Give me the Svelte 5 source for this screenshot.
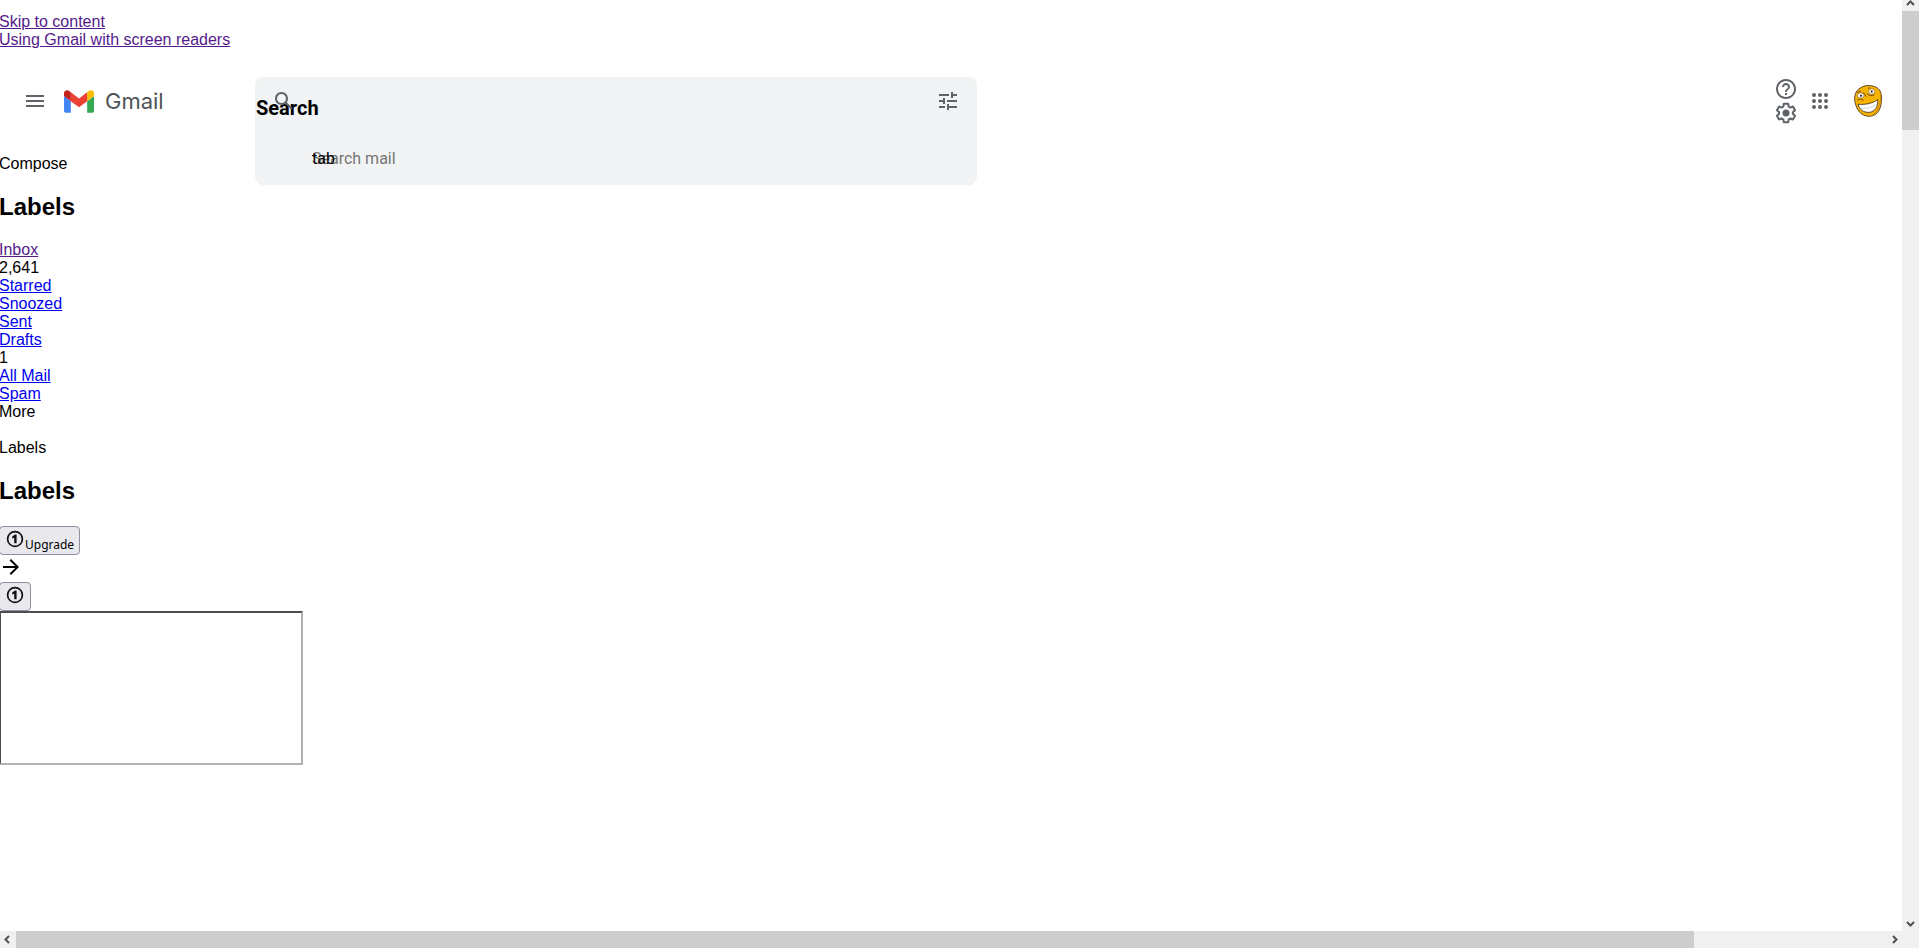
<script>
    const skipLinks = ["Skip to content", "Using Gmail with screen readers"];

    const folders = [
        { name: "Inbox", count: "2,641", visited: true },
        { name: "Starred" },
        { name: "Snoozed" },
        { name: "Sent" },
        { name: "Drafts", count: "1" },
        { name: "All Mail" },
        { name: "Spam" },
    ];

    const dots = [6, 12, 18];

    let query = $state("");
</script>

{#snippet badge()}
    <svg class="badge" viewBox="0 0 18 18" aria-hidden="true">
        <circle cx="9" cy="9" r="7.4" fill="none" stroke="#111" stroke-width="1.7" />
        <path d="M8.2 13.300V7.700l-2 .9V6.500L9 4.600h1.600v8.700z" fill="#111" />
    </svg>
{/snippet}

<div class="window">
    <div class="page">
        <div class="side">
            {#each skipLinks as text}
                <a class="line visited" href="#content">{text}</a>
            {/each}

            <header class="brand">
                <button class="plain icon" aria-label="Main menu">
                    <svg viewBox="0 0 24 24"><path d="M3 18h18v-2H3v2zm0-5h18v-2H3v2zm0-7v2h18V6H3z" /></svg>
                </button>
                <a class="logo" href="#inbox">
                    <svg viewBox="52 42 88 66" aria-hidden="true">
                        <path fill="#4285f4" d="M58 108h14V74L52 59v43c0 3.32 2.69 6 6 6" />
                        <path fill="#34a853" d="M120 108h14c3.32 0 6-2.69 6-6V59l-20 15" />
                        <path fill="#fbbc04" d="M120 48v26l20-15v-8c0-7.42-8.47-11.65-14.4-7.2" />
                        <path fill="#ea4335" d="M72 74V48l24 18 24-18v26L96 92" />
                        <path fill="#c5221f" d="M52 51v8l20 15V48l-5.6-4.2c-5.94-4.45-14.4-.22-14.4 7.2" />
                    </svg>
                    <span>Gmail</span>
                </a>
            </header>

            <button class="plain line">Compose</button>
            <h2>Labels</h2>
            <nav>
                {#each folders as folder}
                    <a class="line" class:visited={folder.visited} href="#{folder.name}">{folder.name}</a>
                    {#if folder.count}
                        <div class="line">{folder.count}</div>
                    {/if}
                {/each}
                <button class="plain line">More</button>
            </nav>
            <div class="line section">Labels</div>
            <h2>Labels</h2>

            <div class="extras">
                <button class="upgrade">{@render badge()}Upgrade</button>
                <svg class="arrow" viewBox="0 0 24 24" aria-hidden="true">
                    <path d="M12 4l-1.41 1.41L16.17 11H4v2h12.17l-5.58 5.59L12 20l8-8z" />
                </svg>
                <button class="upgrade" aria-label="Upgrade">{@render badge()}</button>
                <div class="frame"></div>
            </div>
        </div>

        <form class="search" role="search">
            <button class="plain icon find" type="button" aria-label="Search mail">
                <svg viewBox="0 0 24 24">
                    <path d="M20.49 19l-5.73-5.73C15.53 12.2 16 10.91 16 9.5 16 5.91 13.09 3 9.5 3S3 5.91 3 9.5 5.91 16 9.5 16c1.41 0 2.7-.47 3.77-1.24L19 20.49 20.49 19zM5 9.5C5 7.01 7.01 5 9.5 5S14 7.01 14 9.5 11.99 14 9.5 14 5 11.99 5 9.5z" />
                </svg>
            </button>
            <h2>Search</h2>
            <div class="field">
                <input type="text" placeholder="Search mail" aria-label="Search mail" bind:value={query} />
                <span class="hint">tab</span>
            </div>
            <button class="plain icon tune" type="button" aria-label="Show search options">
                <svg viewBox="0 0 24 24">
                    <path d="M3 17v2h6v-2H3zM3 5v2h10V5H3zm10 16v-2h8v-2h-8v-2h-2v6h2zM7 9v2H3v2h4v2h2V9H7zm14 4v-2H11v2h10zm-6-4h2V7h4V5h-4V3h-2v6z" />
                </svg>
            </button>
        </form>

        <div class="tools">
            <div class="stack">
                <button class="plain icon" aria-label="Support">
                    <svg viewBox="0 0 24 24">
                        <path d="M11 18h2v-2h-2v2zm1-16C6.48 2 2 6.48 2 12s4.48 10 10 10 10-4.48 10-10S17.52 2 12 2zm0 18c-4.41 0-8-3.59-8-8s3.59-8 8-8 8 3.59 8 8-3.59 8-8 8zm0-14c-2.21 0-4 1.79-4 4h2c0-1.1.9-2 2-2s2 .9 2 2c0 2-3 1.75-3 5h2c0-2.25 3-2.5 3-5 0-2.21-1.79-4-4-4z" />
                    </svg>
                </button>
                <button class="plain icon" aria-label="Settings">
                    <svg viewBox="0 0 24 24">
                        <path d="M13.85 22.25h-3.7c-.74 0-1.36-.54-1.45-1.27l-.27-1.89c-.27-.14-.53-.29-.79-.46l-1.8.72c-.7.26-1.47-.03-1.81-.65L2.2 15.53c-.35-.66-.2-1.44.36-1.88l1.53-1.19c-.01-.15-.02-.3-.02-.46 0-.15.01-.31.02-.46l-1.52-1.19c-.59-.45-.74-1.26-.37-1.88l1.85-3.19c.34-.62 1.11-.9 1.79-.63l1.81.73c.26-.17.52-.32.78-.46l.27-1.91c.09-.7.71-1.25 1.44-1.25h3.7c.74 0 1.36.54 1.45 1.27l.27 1.89c.27.14.53.29.79.46l1.8-.72c.71-.26 1.48.03 1.82.65l1.84 3.18c.36.66.2 1.44-.36 1.88l-1.52 1.19c.01.15.02.3.02.46s-.01.31-.02.46l1.52 1.19c.56.45.72 1.23.37 1.86l-1.86 3.22c-.34.62-1.11.9-1.8.63l-1.8-.72c-.26.17-.52.32-.78.46l-.27 1.91c-.1.68-.72 1.22-1.46 1.22zm-3.23-2h2.76l.37-2.55.53-.22c.44-.18.88-.44 1.34-.78l.45-.34 2.38.96 1.38-2.4-2.03-1.58.07-.56c.03-.26.06-.51.06-.78s-.03-.53-.06-.78l-.07-.56 2.03-1.58-1.39-2.4-2.39.96-.45-.35c-.42-.32-.87-.58-1.33-.77l-.52-.22-.37-2.55h-2.76l-.37 2.55-.53.21c-.44.19-.88.44-1.34.79l-.45.33-2.38-.95-1.39 2.39 2.03 1.58-.07.56a7 7 0 0 0-.06.79c0 .26.02.53.06.78l.07.56-2.03 1.58 1.38 2.4 2.39-.96.45.35c.43.33.86.58 1.33.77l.53.22.38 2.55z" />
                        <circle cx="12" cy="12" r="3.5" />
                    </svg>
                </button>
            </div>
            <button class="plain icon" aria-label="Google apps">
                <svg viewBox="0 0 24 24">
                    {#each dots as y}
                        {#each dots as x}
                            <circle cx={x} cy={y} r="2" />
                        {/each}
                    {/each}
                </svg>
            </button>
            <button class="plain avatar" aria-label="Google Account">
                <svg viewBox="0 0 32 32">
                    <path d="M11 1.500C16-.5 24 .5 27.500 5c2.600 4 2.500 10 1.300 15.500C27.500 27 23 31.300 17.500 31.300 11 31.300 6.500 27.500 4.500 22 2.500 17 1.800 12 4 7.500 5.500 4.500 8 2.800 11 1.500z" fill="#f5b301" stroke="#3b2a18" stroke-width=".8" />
                    <path d="M28.300 8c1 5-.5 13-3.500 18-2 3-5 5-8 5" fill="none" stroke="#d98c00" />
                    <path d="M6 19.300c7 .5 14-.6 19.600-4.600.8 6.500-2.600 12.400-8.600 12.700C11.800 27.600 7.500 24.800 6 19.300z" fill="#fff" stroke="#3b2a18" stroke-width=".8" />
                    <path d="M8 23c6 1.200 12-.3 17-4" fill="none" stroke="#bbb" stroke-width=".6" />
                    <ellipse cx="8.700" cy="10.500" rx="3.300" ry="2.600" fill="#fff" stroke="#5a4020" stroke-width=".5" />
                    <ellipse cx="19.700" cy="6.500" rx="3" ry="2.600" fill="#fff" stroke="#5a4020" stroke-width=".5" />
                    <circle cx="9" cy="10.700" r="1" fill="#200" />
                    <circle cx="19.700" cy="6.600" r="1" fill="#200" />
                    <path d="M5 7.500l4-1.500M16 3.500l2-.8M11.500 7.500l2.700 4M15 8.500l3 2.200 4.500-.7M5.500 15l3-1 3 1.300" fill="none" stroke="#5a3500" stroke-width=".8" />
                </svg>
            </button>
        </div>
    </div>

    <div class="bar vertical">
        <svg class="up" viewBox="0 0 9 6"><path d="M1 5l3.500-3.500L8 5" /></svg>
        <div class="thumb"></div>
        <svg class="down" viewBox="0 0 9 6"><path d="M1 1l3.500 3.500L8 1" /></svg>
    </div>
    <div class="bar horizontal">
        <svg viewBox="0 0 6 9"><path d="M5 1L1.500 4.500 5 8" /></svg>
        <div class="thumb"></div>
        <svg viewBox="0 0 6 9"><path d="M1 1l3.500 3.500L1 8" /></svg>
    </div>
</div>

<style>
    :global(body) {
        margin: 0;
        background: #fff;
    }
    .window {
        display: grid;
        grid-template-columns: minmax(0, 1fr) 17px;
        grid-template-rows: minmax(0, 1fr) 17px;
        height: 100vh;
        font-family: "Liberation Sans", Arial, sans-serif;
        font-size: 16px;
        line-height: 18px;
        color: #000;
    }
    .page {
        display: grid;
        grid-template-columns: 256px minmax(0, 722px) minmax(150px, 1fr);
        align-items: start;
        margin-left: -1px;
        overflow: hidden;
    }
    .side {
        padding-top: 13px;
    }
    .line {
        display: block;
        width: fit-content;
        height: 18px;
        white-space: nowrap;
    }
    a {
        color: #0000ee;
    }
    a.visited {
        color: #551a8b;
    }
    .plain {
        padding: 0;
        border: none;
        background: none;
        color: inherit;
        font: inherit;
        cursor: pointer;
    }
    .icon {
        flex: none;
        width: 24px;
        height: 24px;
    }
    .icon svg {
        display: block;
        width: 24px;
        height: 24px;
        fill: #5f6368;
    }
    .brand {
        display: flex;
        align-items: center;
        gap: 17px;
        height: 48px;
        margin: 28px 0 30px;
        padding-left: 24px;
    }
    .logo {
        display: flex;
        align-items: center;
        gap: 11px;
        color: #505356;
        font-family: Inter, Roboto, sans-serif;
        font-size: 22px;
        line-height: 24px;
        text-decoration: none;
    }
    .logo svg {
        width: 30px;
        height: 23px;
    }
    h2 {
        margin: 20px 0;
        font-size: 24px;
        line-height: 28px;
    }
    .section {
        margin-top: 18px;
    }
    .extras {
        display: flex;
        flex-direction: column;
        align-items: flex-start;
        padding-top: 1px;
    }
    .upgrade {
        display: flex;
        align-items: flex-end;
        gap: 1px;
        height: 29px;
        padding: 0 5px 4px 6px;
        border: 1px solid #8f8f9d;
        border-radius: 4px;
        background: #e9e9ed;
        color: #000;
        font-family: "Noto Sans", sans-serif;
        font-size: 12px;
        line-height: 16px;
        box-sizing: border-box;
    }
    .badge {
        width: 18px;
        height: 18px;
        margin-bottom: 2px;
    }
    .upgrade:not([aria-label]) {
        padding-bottom: 1px;
    }
    .upgrade:not([aria-label]) .badge {
        margin-bottom: 5px;
    }
    .upgrade[aria-label] {
        padding-right: 6px;
    }
    .arrow {
        width: 24px;
        height: 24px;
        margin-bottom: 3px;
    }
    .frame {
        width: 300px;
        height: 150px;
        border: 2px solid;
        border-color: #4c4c4c #b2b2b2 #b2b2b2 #4c4c4c;
    }
    .search {
        position: relative;
        height: 108px;
        margin-top: 77px;
        border-radius: 8px;
        background: #f1f3f4;
        font-family: Roboto, sans-serif;
        line-height: 24px;
    }
    .search h2 {
        margin: 0 0 27px;
        padding: 19px 0 0 1px;
        font-size: 20px;
        line-height: 24px;
    }
    .find,
    .tune {
        position: absolute;
        top: 12px;
    }
    .find {
        left: 17px;
    }
    .tune {
        right: 17px;
    }
    .field {
        position: relative;
        margin: 0 56px;
    }
    input {
        display: block;
        width: 100%;
        height: 24px;
        padding: 0 1px;
        border: none;
        outline: none;
        background: transparent;
        font: inherit;
        box-sizing: border-box;
    }
    input::placeholder {
        color: #757575;
        opacity: 1;
    }
    .hint {
        position: absolute;
        top: 0;
        left: 1px;
        pointer-events: none;
    }
    .tools {
        display: flex;
        align-items: center;
        justify-content: flex-end;
        gap: 10px;
        height: 48px;
        margin-top: 77px;
        padding-right: 18px;
    }
    .stack {
        display: flex;
        flex-direction: column;
    }
    .avatar {
        width: 32px;
        height: 32px;
        margin-left: 10px;
    }
    .avatar svg {
        display: block;
    }
    .bar {
        display: flex;
        align-items: center;
        background: #f0f0f0;
    }
    .bar svg {
        flex: none;
        fill: none;
        stroke: #505050;
        stroke-width: 2;
    }
    .thumb {
        background: #cdcdcd;
    }
    .vertical {
        flex-direction: column;
    }
    .vertical svg {
        width: 9px;
        height: 6px;
    }
    .vertical .up {
        margin-bottom: 5px;
    }
    .vertical .down {
        margin: auto 0 4px;
    }
    .vertical .thumb {
        width: 17px;
        height: 12.8%;
    }
    .horizontal {
        grid-column: 1 / -1;
        padding: 0 21px 0 4px;
    }
    .horizontal svg {
        width: 6px;
        height: 9px;
    }
    .horizontal .thumb {
        width: 88.6%;
        height: 17px;
        margin: 0 auto 0 6px;
    }
</style>
